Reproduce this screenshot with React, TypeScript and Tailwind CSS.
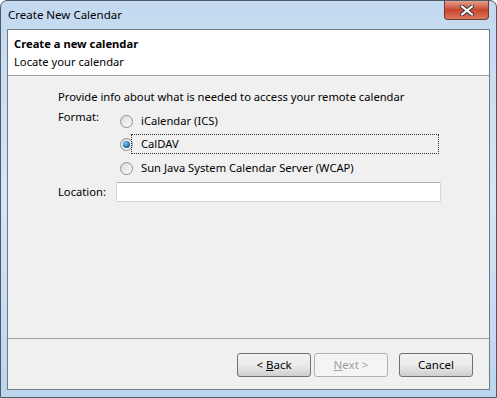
import React from "react";

function Radio({ checked }: { checked?: boolean }) {
  return (
    <span className="w-[13px] h-[13px] rounded-full border border-[#8e8f8f] bg-gradient-to-br from-[#d9d9d9] to-[#fdfdfd] flex items-center justify-center shrink-0">
      {checked && (
        <span className="w-[7px] h-[7px] rounded-full bg-[radial-gradient(circle_at_40%_35%,#7fd0f5,#1d6fa5_60%,#0d3e63)]" />
      )}
    </span>
  );
}

function Btn({ children, disabled }: { children: React.ReactNode; disabled?: boolean }) {
  return (
    <div
      className={
        "w-[74px] h-[24px] rounded-[3px] border flex items-center justify-center text-[11.5px] " +
        (disabled
          ? "border-[#adb2b5] bg-[#f4f4f4] text-[#a0a0a0]"
          : "border-[#707070] bg-gradient-to-b from-[#f2f2f2] via-[#ebebeb] to-[#cfcfcf] text-black")
      }
    >
      {children}
    </div>
  );
}

export default function App() {
  return (
    <div className="w-[497px] h-[398px] font-['Noto_Sans',sans-serif] text-[11.2px] text-black">
      <div className="w-full h-full rounded-t-[7px] border border-[#4e5a66] bg-gradient-to-b from-[#c3d9ef] via-[#d4e6f7] to-[#bcd5ee] flex flex-col px-[6px] pb-[7px]">
        <div className="h-[28px] flex items-start justify-between">
          <span className="pt-[6px] pl-[1px] text-[11.5px] leading-[16px]">Create New Calendar</span>
          <div className="w-[45px] h-[19px] mr-[1px] rounded-b-[4px] border border-t-0 border-[#6b3a32] bg-gradient-to-b from-[#e3a08f] via-[#c8452c] to-[#d9785e] flex items-center justify-center">
            <svg width="14" height="11" viewBox="0 0 14 11">
              <path d="M2 1.5 L12 9.5 M12 1.5 L2 9.5" stroke="#3a3a3a" strokeWidth="4" strokeLinecap="round" />
              <path d="M2 1.5 L12 9.5 M12 1.5 L2 9.5" stroke="#ffffff" strokeWidth="2.2" strokeLinecap="round" />
            </svg>
          </div>
        </div>
        <div className="flex-1 border border-[#6d7a87] bg-[#f0f0f0] flex flex-col">
          <div className="h-[46px] bg-white border-b border-[#a0a0a0] pl-[6px] pt-[5px] leading-[18px]">
            <div className="font-bold">Create a new calendar</div>
            <div>Locate your calendar</div>
          </div>
          <div className="flex-1 pl-[50px] pt-[12px]">
            <div className="leading-[18px]">Provide info about what is needed to access your remote calendar</div>
            <div className="flex mt-[2px]">
              <div className="w-[58px] leading-[18px]">Format:</div>
              <div className="flex flex-col">
                <div className="flex items-center h-[20px] mt-[3px] pl-[4px]">
                  <Radio />
                  <span className="ml-[8px]">iCalendar (ICS)</span>
                </div>
                <div className="flex items-center h-[20px] mt-[3px] pl-[4px] w-[323px] relative">
                  <Radio checked />
                  <span className="ml-[8px]">CalDAV</span>
                  <span className="absolute left-[15px] right-0 top-0 bottom-0 border border-dotted border-[#333]" />
                </div>
                <div className="flex items-center h-[20px] mt-[4px] pl-[4px]">
                  <Radio />
                  <span className="ml-[8px]">Sun Java System Calendar Server (WCAP)</span>
                </div>
              </div>
            </div>
            <div className="flex items-center mt-[4px]">
              <div className="w-[58px]">Location:</div>
              <div className="w-[325px] h-[20px] bg-white border border-[#d5d5d5] border-t-[#ababab] rounded-[2px]" />
            </div>
          </div>
          <div className="h-[51px] border-t border-[#a0a0a0] flex items-center justify-end pr-[16px] pt-[1px]">
            <Btn>
              &lt; <span className="underline ml-[3px]">B</span>ack
            </Btn>
            <div className="ml-[3px]">
              <Btn disabled>
                <span className="underline">N</span>ext &gt;
              </Btn>
            </div>
            <div className="ml-[11px]">
              <Btn>Cancel</Btn>
            </div>
          </div>
        </div>
      </div>
    </div>
  );
}
